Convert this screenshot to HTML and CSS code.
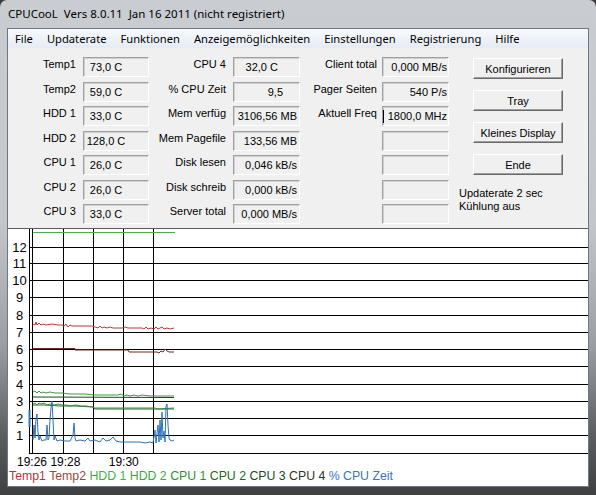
FILE: index.html
```html
<!DOCTYPE html>
<html lang="de">
<head>
    <meta charset="UTF-8">
    <title>CPUCooL</title>
    <link rel="stylesheet" href="styles.css">
</head>
<body>
    <div class="window">
        <div class="titlebar">CPUCooL&nbsp; Vers 8.0.11&nbsp; Jan 16 2011 (nicht registriert)</div>

        <div class="client">
            <ul class="menubar">
                <li>File</li>
                <li>Updaterate</li>
                <li>Funktionen</li>
                <li>Anzeigemöglichkeiten</li>
                <li>Einstellungen</li>
                <li>Registrierung</li>
                <li>Hilfe</li>
            </ul>

            <div class="panel">
                <div class="fields">
                    <span class="label">Temp1</span><span class="box temp">73,0 C</span>
                    <span class="label">CPU 4</span><span class="box mid pad-c">32,0 C</span>
                    <span class="label">Client total</span><span class="box rate">0,000 MB/s</span>

                    <span class="label">Temp2</span><span class="box temp">59,0 C</span>
                    <span class="label">% CPU Zeit</span><span class="box mid pad-p">9,5</span>
                    <span class="label">Pager Seiten</span><span class="box rate">540 P/s</span>

                    <span class="label">HDD 1</span><span class="box temp">33,0 C</span>
                    <span class="label">Mem verfüg</span><span class="box mid">3106,56 MB</span>
                    <span class="label">Aktuell Freq</span><span class="box rate focused"><i class="caret"></i>1800,0 MHz</span>

                    <span class="label">HDD 2</span><span class="box temp">128,0 C</span>
                    <span class="label">Mem Pagefile</span><span class="box mid">133,56 MB</span>
                    <span class="label"></span><span class="box rate"></span>

                    <span class="label">CPU 1</span><span class="box temp">26,0 C</span>
                    <span class="label">Disk lesen</span><span class="box mid">0,046 kB/s</span>
                    <span class="label"></span><span class="box rate"></span>

                    <span class="label">CPU 2</span><span class="box temp">26,0 C</span>
                    <span class="label">Disk schreib</span><span class="box mid">0,000 kB/s</span>
                    <span class="label"></span><span class="box rate"></span>

                    <span class="label">CPU 3</span><span class="box temp">33,0 C</span>
                    <span class="label">Server total</span><span class="box mid">0,000 MB/s</span>
                    <span class="label"></span><span class="box rate"></span>
                </div>

                <div class="side">
                    <button class="btn">Konfigurieren</button>
                    <button class="btn">Tray</button>
                    <button class="btn">Kleines Display</button>
                    <button class="btn">Ende</button>
                    <div class="status">
                        Updaterate 2 sec<br>
                        Kühlung aus
                    </div>
                </div>
            </div>

            <div class="chart">
                <svg class="plot" width="580" height="226" viewBox="8 229 580 226">
                    <g class="grid">
                        <line x1="29" y1="247.5" x2="588" y2="247.5"/>
                        <line x1="29" y1="263.5" x2="588" y2="263.5"/>
                        <line x1="29" y1="280.5" x2="588" y2="280.5"/>
                        <line x1="29" y1="297.5" x2="588" y2="297.5"/>
                        <line x1="29" y1="315.5" x2="588" y2="315.5"/>
                        <line x1="29" y1="332.5" x2="588" y2="332.5"/>
                        <line x1="29" y1="349.5" x2="588" y2="349.5"/>
                        <line x1="29" y1="366.5" x2="588" y2="366.5"/>
                        <line x1="29" y1="384.5" x2="588" y2="384.5"/>
                        <line x1="29" y1="401.5" x2="588" y2="401.5"/>
                        <line x1="29" y1="418.5" x2="588" y2="418.5"/>
                        <line x1="29" y1="435.5" x2="588" y2="435.5"/>
                        <line x1="29" y1="453.5" x2="588" y2="453.5"/>
                        <line x1="29.5" y1="229" x2="29.5" y2="454"/>
                        <line x1="32.5" y1="229" x2="32.5" y2="454"/>
                        <line x1="63.5" y1="229" x2="63.5" y2="454"/>
                        <line x1="93.5" y1="229" x2="93.5" y2="454"/>
                        <line x1="123.5" y1="229" x2="123.5" y2="454"/>
                        <line x1="153.5" y1="229" x2="153.5" y2="454"/>
                    </g>
                    <g class="axis">
                        <text x="19.5" y="251.5">12</text>
                        <text x="19.5" y="267.5">11</text>
                        <text x="19.5" y="284.5">10</text>
                        <text x="19.5" y="301.5">9</text>
                        <text x="19.5" y="319.5">8</text>
                        <text x="19.5" y="336.5">7</text>
                        <text x="19.5" y="353.5">6</text>
                        <text x="19.5" y="370.5">5</text>
                        <text x="19.5" y="388.5">4</text>
                        <text x="19.5" y="405.5">3</text>
                        <text x="19.5" y="422.5">2</text>
                        <text x="19.5" y="439.5">1</text>
                    </g>
                    <g class="series">
                        <polyline class="s-hdd2" points="33,232.5 175,232.5"/>
                        <polyline class="s-temp1" points="33,324 35,325 36,322 37,325 39,323 41,325 43,324 46,325 52,324 58,325 62,325 64,326 66,324 68,327 70,325 72,326 80,326 92,326 95,327 98,328 100,326 102,328 104,327 107,328 110,327 113,328 122,328 125,327 128,328 142,328 144,329 146,327 148,329 151,328 154,329 156,327 158,329 160,328 162,327 164,329 167,328 170,329 174,328"/>
                        <polyline class="s-temp2" points="33,348.5 75,348.5 75,350 128,350 129,352 157,352 159,353 161,351 163,352 165,349 167,351 169,352 174,352"/>
                        <polyline class="s-hdd1" points="33,392 35,391 37,393 39,391 41,393 43,392 46,393 50,392 55,393 62,393 70,394 85,394 94,395 110,395 118,395 121,394 124,396 127,395 130,396 134,395 138,396 142,395 150,396 174,396"/>
                        <polyline class="s-cpu3" points="33,397 174,397.5"/>
                        <polyline class="s-cpu2" points="33,405 45,405 60,406 75,406 93,407 95,409 174,409"/>
                        <polyline class="s-cpu1" points="33,404 35,403 37,405 39,403 41,404 44,403 47,405 50,404 54,405 58,404 62,405 66,405 70,406 76,405 80,406 86,406 92,407 95,408 110,408 125,408 140,408 155,408 158,409 174,408"/>
                        <line class="s-cpu" x1="29.5" y1="410" x2="29.5" y2="427"/>
                        <polyline class="s-cpu" points="33,440 34,425 35,438 36,418 37,414 38,432 39,440 40,436 42,441 44,440 46,440 47,425 48,440 49,438 50,420 51,408 52,401 53,420 54,440 55,436 57,441 60,440 65,441 70,441 73,435 74,423 75,438 76,441 80,440 85,441 88,438 90,441 95,440 100,442 103,438 106,441 110,440 113,437 116,441 120,442 130,442 140,442 145,443 150,442 153,443 155,430 156,443 158,425 159,442 160,420 161,440 162,412 163,438 164,431 165,442 166,406 167,404 168,425 169,438 170,440 172,441 174,440"/>
                    </g>
                </svg>

                <div class="times">
                    <span class="t-26">19:26</span>
                    <span class="t-28">19:28</span>
                    <span class="t-30">19:30</span>
                </div>

                <div class="legend">
                    <span class="c-temp1">Temp1</span>
                    <span class="c-temp2">Temp2</span>
                    <span class="c-hdd1">HDD 1</span>
                    <span class="c-hdd2">HDD 2</span>
                    <span class="c-cpu1">CPU 1</span>
                    <span class="c-cpu2">CPU 2</span>
                    <span class="c-cpu3">CPU 3</span>
                    <span class="c-cpu4">CPU 4</span>
                    <span class="c-cpu">% CPU Zeit</span>
                </div>
            </div>
        </div>
    </div>
</body>
</html>
```

FILE: styles.css
```css
body {
    margin: 0;
    width: 596px;
    height: 495px;
    overflow: hidden;
    background-color: #3c3c3c;
    font-family: 'Liberation Sans', Arial, sans-serif;
}

.window {
    height: 495px;
    box-sizing: border-box;
    padding: 0 7px 8px 7px;
    display: flex;
    flex-direction: column;
    border-radius: 7px 7px 0 0;
    background: linear-gradient(180deg, #c9cdd2 0%, #c3c7cc 45%, #9a9ea3 70%, #5b5d60 88%, #3e3f41 100%);
}

.titlebar {
    height: 28px;
    line-height: 28px;
    padding-left: 1px;
    font-family: 'Noto Sans', sans-serif;
    font-size: 11.5px;
    color: #000;
    white-space: nowrap;
}

.client {
    flex: 1;
    display: flex;
    flex-direction: column;
    border: 1px solid #6b7889;
    background-color: #fff;
}

/* menu */
.menubar {
    list-style-type: none;
    margin: 0;
    padding: 0;
    height: 19px;
    display: flex;
    background: linear-gradient(180deg, #f7f9fc, #e6ebf4);
    font-family: 'Noto Sans', sans-serif;
    font-size: 11.2px;
    line-height: 19px;
}

.menubar li {
    padding: 0 7px;
}

/* top panel */
.panel {
    height: 181px;
    box-sizing: border-box;
    background-color: #f0f0f0;
    border-bottom: 1px solid #5a5a5a;
    display: flex;
    padding-top: 9px;
    font-size: 11px;
}

.fields {
    display: grid;
    grid-template-columns: 75px 66px 84px 67px 82px 67px;
    grid-auto-rows: 20px;
    row-gap: 4.5px;
}

.label {
    text-align: right;
    line-height: 14px;
    padding-right: 7px;
    white-space: nowrap;
}

.fields .label:nth-child(6n+5) {
    padding-right: 5px;
}

.box {
    box-sizing: border-box;
    height: 20px;
    line-height: 18px;
    border: 1px solid;
    border-color: #a0a0a0 #fff #fff #a0a0a0;
    box-shadow: inset 1px 1px 0 #d0d0d0;
    white-space: nowrap;
    overflow: hidden;
}

.box.temp {
    text-align: center;
    padding-right: 20px;
}

.box.mid {
    text-align: right;
    padding-right: 2px;
}

.box.pad-c {
    padding-right: 21px;
}

.box.pad-p {
    padding-right: 16px;
}

.box.rate {
    text-align: right;
    padding-right: 1px;
}

.box.focused {
    display: flex;
    justify-content: space-between;
    align-items: center;
}

.caret {
    display: block;
    width: 1px;
    height: 13px;
    background-color: #000;
}

.side {
    display: flex;
    flex-direction: column;
    align-items: flex-start;
    margin-left: 10px;
    padding-top: 1px;
}

.btn {
    width: 90px;
    height: 21px;
    margin: 0 0 11px 14px;
    padding: 0;
    font-family: 'Liberation Sans', Arial, sans-serif;
    font-size: 11px;
    color: #000;
    background-color: #f0f0f0;
    border: 1px solid;
    border-color: #fff #696969 #696969 #fff;
    box-shadow: inset -1px -1px 0 #a0a0a0;
}

.status {
    margin-top: 1px;
    line-height: 13px;
}

/* chart */
.chart {
    flex: 1;
    background-color: #fff;
}

.plot {
    display: block;
}

.grid line {
    stroke: #000;
    stroke-width: 1;
    shape-rendering: crispEdges;
}

.axis text {
    font-family: 'Liberation Sans', Arial, sans-serif;
    font-size: 13px;
    text-anchor: middle;
    fill: #000;
}

.series polyline, .series line {
    fill: none;
    stroke-width: 1;
}

.s-hdd2 { stroke: #4cae4c; }
.s-temp1 { stroke: #b8383a; }
.s-temp2 { stroke: #6a2c1e; stroke-width: 1.4; }
.s-hdd1 { stroke: #3c9a3c; }
.s-cpu3 { stroke: #1e4a1e; }
.s-cpu2 { stroke: #2c6a2c; }
.s-cpu1 { stroke: #3a8a3a; }
.s-cpu { stroke: #2f72b8; }
line.s-cpu { stroke-width: 2; }

.times {
    height: 14px;
    line-height: 14px;
    font-size: 12px;
    white-space: nowrap;
}

.times span {
    display: inline-block;
}

.t-26 { margin-left: 9px; }
.t-28 { margin-left: 0; }
.t-30 { margin-left: 25px; }

.legend {
    height: 15px;
    line-height: 15px;
    padding-left: 1px;
    font-size: 12.3px;
    white-space: nowrap;
}

.c-temp1 { color: #c0303c; }
.c-temp2 { color: #a2483a; }
.c-hdd1 { color: #3fb23f; }
.c-hdd2 { color: #3ea83e; }
.c-cpu1 { color: #2f8e2f; }
.c-cpu2 { color: #226a22; }
.c-cpu3 { color: #1f4a1f; }
.c-cpu4 { color: #2e3320; }
.c-cpu { color: #3575c3; }
```
